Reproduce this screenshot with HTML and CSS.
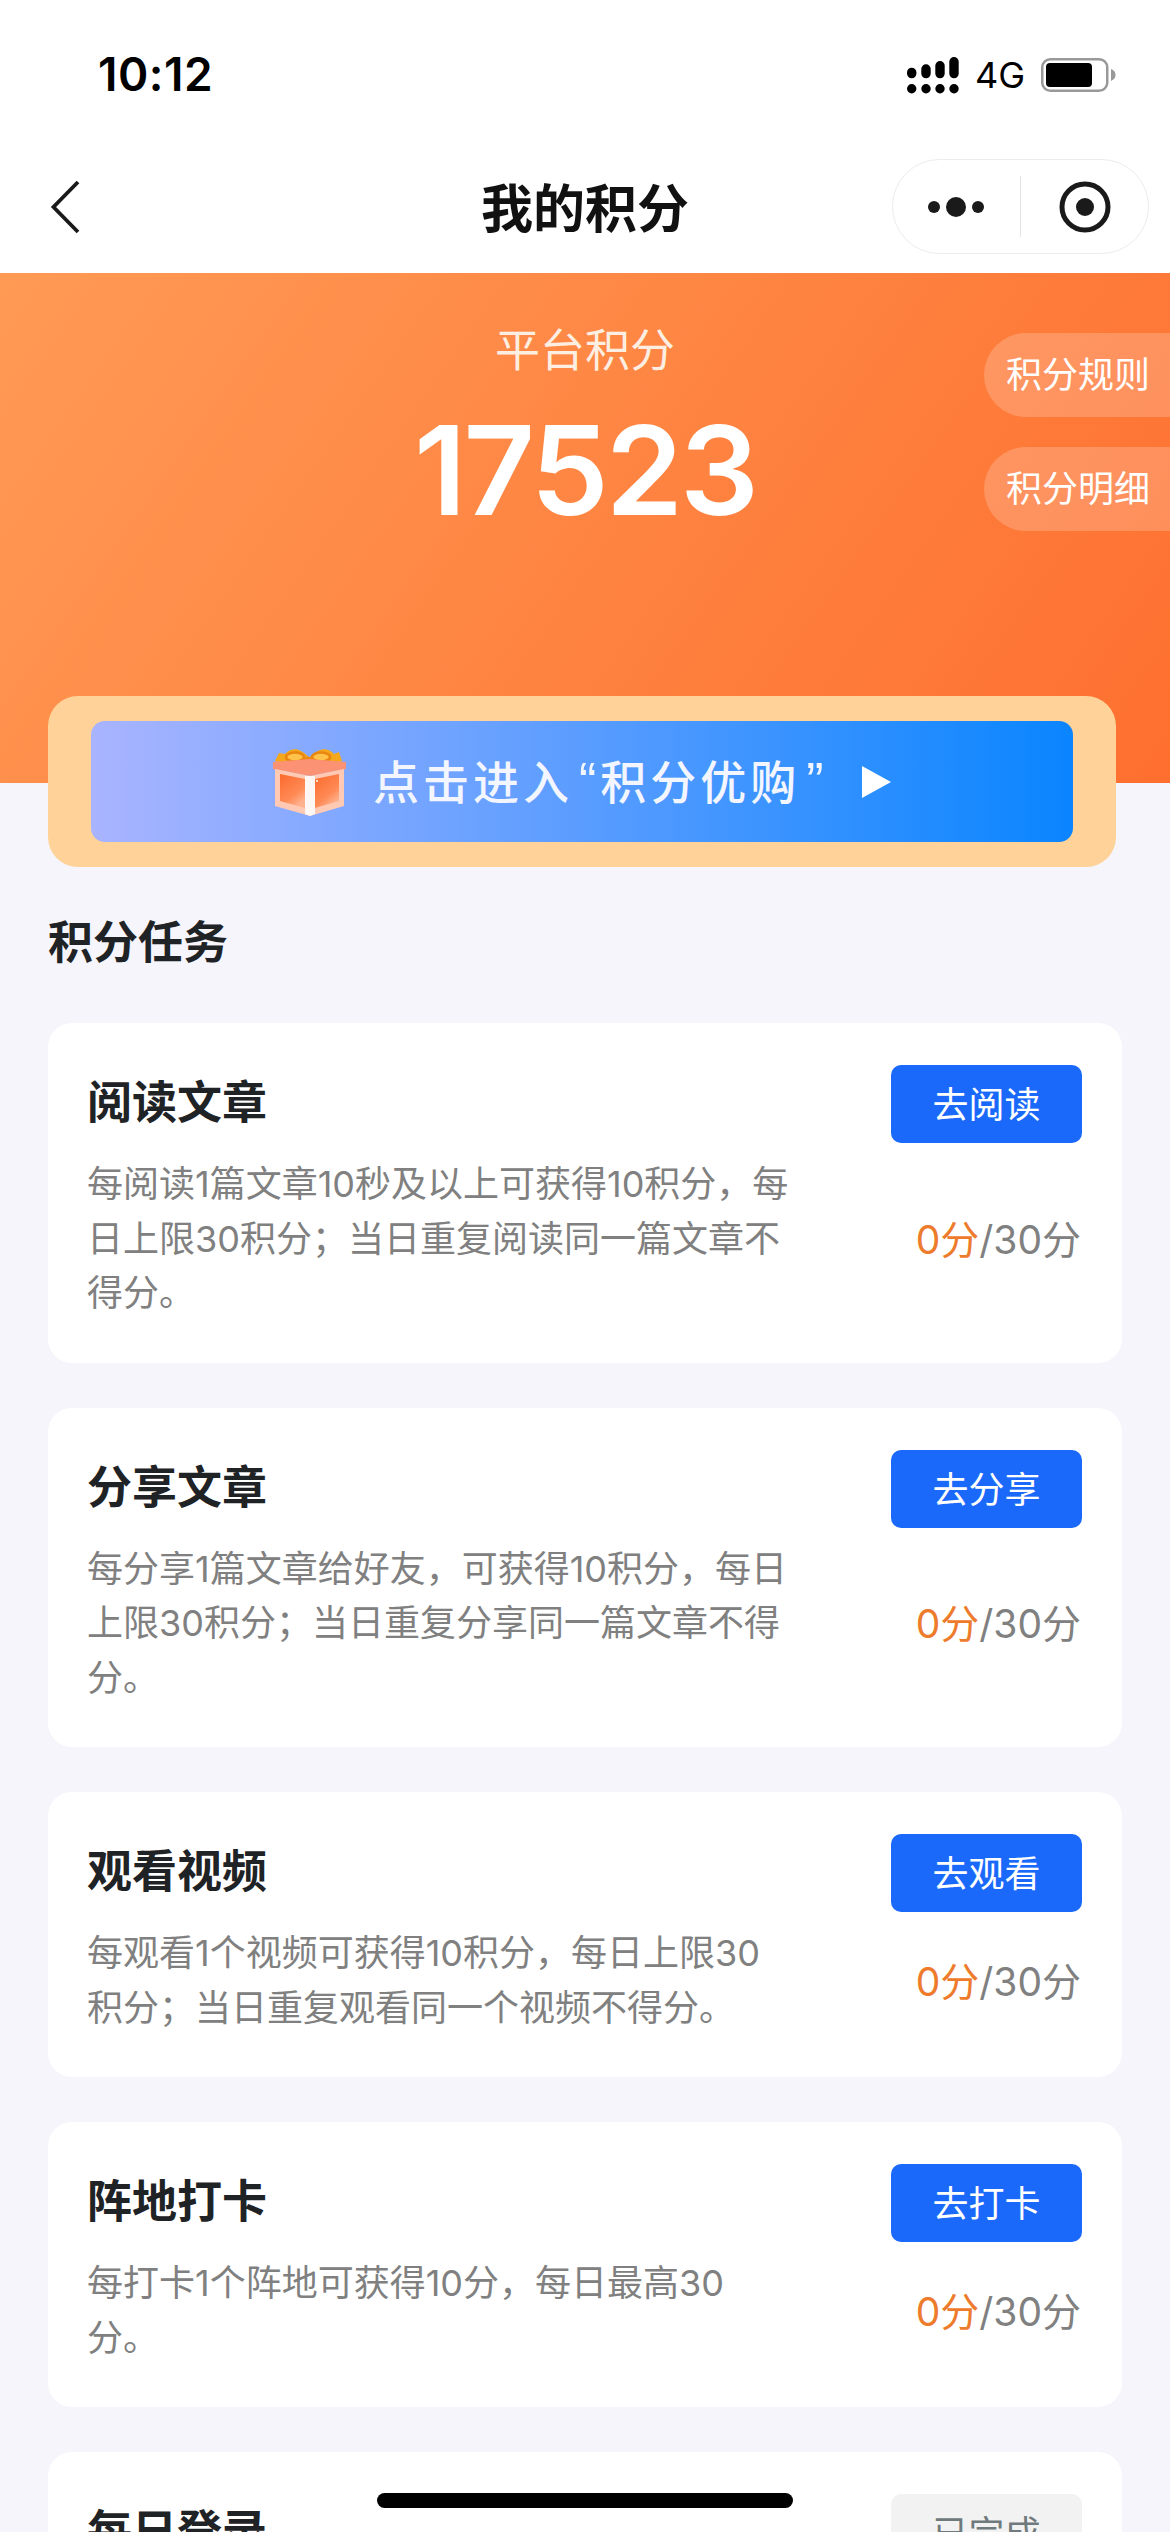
FILE: index.html
```html
<!DOCTYPE html>
<html lang="zh-CN">
<head>
    <meta charset="UTF-8">
    <meta name="viewport" content="width=device-width, initial-scale=1.0">
    <title>我的积分</title>
    <link rel="stylesheet" href="styles.css">
</head>
<body>
    <div class="page">
        <div class="status-bar">
            <span class="time">10:12</span>
            <div class="status-icons">
                <svg class="signal" width="52" height="37" viewBox="0 0 52 37">
                    <rect x="0" y="10.7" width="9.4" height="10.6" rx="4.7"/>
                    <rect x="14.3" y="7.3" width="9.4" height="14" rx="4.7"/>
                    <rect x="28.3" y="4" width="9.4" height="17.3" rx="4.7"/>
                    <rect x="42.3" y="0" width="9.4" height="21.3" rx="4.7"/>
                    <circle cx="4.7" cy="31.7" r="4.7"/>
                    <circle cx="19" cy="31.7" r="4.7"/>
                    <circle cx="33" cy="31.7" r="4.7"/>
                    <circle cx="47" cy="31.7" r="4.7"/>
                </svg>
                <span class="net">4G</span>
                <svg class="battery" width="75" height="34" viewBox="0 0 75 34">
                    <rect x="1.25" y="1.25" width="65" height="31.5" rx="8" fill="none" stroke="#999" stroke-width="2.5"/>
                    <rect x="5" y="5" width="46" height="24" rx="4" fill="#000"/>
                    <path d="M70 11 C73 12 74.5 14 74.5 17 C74.5 20 73 21 70 23 Z" fill="#999"/>
                </svg>
            </div>
        </div>

        <div class="nav-bar">
            <svg class="back" width="32" height="54" viewBox="0 0 32 54">
                <path d="M28 2 L3.5 27 L28 52" fill="none" stroke="#1a1a1a" stroke-width="3.8"/>
            </svg>
            <h1 class="nav-title">我的积分</h1>
            <div class="capsule">
                <svg class="more" width="56" height="20" viewBox="0 0 56 20">
                    <circle cx="6" cy="10" r="6"/>
                    <circle cx="28" cy="10" r="10"/>
                    <circle cx="50" cy="10" r="6"/>
                </svg>
                <span class="capsule-line"></span>
                <svg class="target" width="52" height="52" viewBox="0 0 52 52">
                    <circle cx="26" cy="26" r="23" fill="none" stroke="#1a1a1a" stroke-width="5"/>
                    <circle cx="26" cy="26" r="9" fill="#1a1a1a"/>
                </svg>
            </div>
        </div>

        <div class="hero">
            <div class="hero-label">平台积分</div>
            <div class="hero-score">17523</div>
            <a class="hero-pill pill-rule">积分规则</a>
            <a class="hero-pill pill-detail">积分明细</a>
        </div>

        <div class="banner-wrap">
            <div class="banner">
                <svg class="gift" width="75" height="68" viewBox="0 0 75 68">
                    <defs>
                        <linearGradient id="boxFill" x1="0" y1="0" x2="0.6" y2="1">
                            <stop offset="0" stop-color="#fb6a2c"/>
                            <stop offset="0.7" stop-color="#ff8a55"/>
                            <stop offset="1" stop-color="#ffb28f"/>
                        </linearGradient>
                    </defs>
                    <path d="M3 13 L7 5 L13 6 C17 1 24 0 29 3 C33 5 36 8 37 10 C39 8 42 5 46 3 C51 0 58 1 62 6 L67 4 L70 13 L60 18 H14 Z" fill="#f5a81c"/>
                    <ellipse cx="23" cy="9" rx="9" ry="4.5" fill="#ffc24a" stroke="#e8860f" stroke-width="2.6"/>
                    <ellipse cx="49" cy="9" rx="9" ry="4.5" fill="#ffc24a" stroke="#e8860f" stroke-width="2.6"/>
                    <circle cx="36" cy="12" r="3.5" fill="#ee8a12"/>
                    <path d="M1 14 L37 11 L74 14 V21 L38 28 L1 21 Z" fill="#fb9274"/>
                    <path d="M3 21 L38 28 L72 21 V58 L38 68 L3 58 Z" fill="#ffc9b4"/>
                    <path d="M8 26 L33 31 V60 L8 53 Z" fill="url(#boxFill)"/>
                    <path d="M43 31 L67 26 V53 L43 60 Z" fill="url(#boxFill)"/>
                    <path d="M33 28 L43 28 V66 L38 68 L33 66 Z" fill="#fff" opacity="0.85"/>
                    <circle cx="45" cy="33" r="1" fill="#fff"/>
                </svg>
                <span class="banner-text">点击进入<span class="quote">“</span>积分优购<span class="quote">”</span></span>
                <span class="banner-arrow"></span>
            </div>
        </div>

        <h2 class="section-title">积分任务</h2>

        <div class="task-list">
            <div class="task">
                <div class="task-info">
                    <h3>阅读文章</h3>
                    <p>每阅读1篇文章10秒及以上可获得10积分，每日上限30积分；当日重复阅读同一篇文章不得分。</p>
                </div>
                <div class="task-side">
                    <button class="task-btn">去阅读</button>
                    <div class="task-score"><span><em>0分</em>/30分</span></div>
                </div>
            </div>
            <div class="task">
                <div class="task-info">
                    <h3>分享文章</h3>
                    <p>每分享1篇文章给好友，可获得10积分，每日上限30积分；当日重复分享同一篇文章不得分。</p>
                </div>
                <div class="task-side">
                    <button class="task-btn">去分享</button>
                    <div class="task-score"><span><em>0分</em>/30分</span></div>
                </div>
            </div>
            <div class="task">
                <div class="task-info">
                    <h3>观看视频</h3>
                    <p>每观看1个视频可获得10积分，每日上限30积分；当日重复观看同一个视频不得分。</p>
                </div>
                <div class="task-side">
                    <button class="task-btn">去观看</button>
                    <div class="task-score"><span><em>0分</em>/30分</span></div>
                </div>
            </div>
            <div class="task">
                <div class="task-info">
                    <h3>阵地打卡</h3>
                    <p>每打卡1个阵地可获得10分，每日最高30分。</p>
                </div>
                <div class="task-side">
                    <button class="task-btn">去打卡</button>
                    <div class="task-score"><span><em>0分</em>/30分</span></div>
                </div>
            </div>
            <div class="task">
                <div class="task-info">
                    <h3>每日登录</h3>
                </div>
                <div class="task-side">
                    <button class="task-btn done">已完成</button>
                </div>
            </div>
        </div>

        <div class="home-bar"></div>
    </div>
</body>
</html>
```

FILE: styles.css
```css
html, body {
    margin: 0;
    padding: 0;
}
body {
    font-family: Inter, "Noto Sans CJK SC", sans-serif;
    background-color: #f5f5fb;
}
.page {
    position: relative;
    width: 1170px;
    height: 2532px;
    overflow: hidden;
    background-color: #f5f5fb;
}

/* status bar */
.status-bar {
    height: 146px;
    box-sizing: border-box;
    padding: 46px 54px 0 98px;
    background-color: #fff;
    display: flex;
    justify-content: space-between;
    align-items: flex-start;
}
.time {
    font-size: 46px;
    line-height: 56px;
    font-weight: 600;
    letter-spacing: 0.5px;
    color: #000;
}
.status-icons {
    display: flex;
    align-items: center;
    gap: 16px;
    padding-top: 10px;
}
.signal {
    fill: #000;
}
.net {
    font-size: 36px;
    line-height: 38px;
    color: #000;
}

/* nav bar */
.nav-bar {
    position: relative;
    height: 127px;
    background-color: #fff;
    display: flex;
    align-items: center;
    justify-content: center;
}
.back {
    position: absolute;
    left: 50px;
    top: 34px;
}
.nav-title {
    margin: 0;
    font-size: 52px;
    font-weight: 700;
    color: #111;
    line-height: 70px;
}
.capsule {
    position: absolute;
    right: 21px;
    top: 13px;
    width: 257px;
    height: 95px;
    box-sizing: border-box;
    border: 1px solid #ececec;
    border-radius: 48px;
    display: flex;
    align-items: center;
    padding-left: 35px;
}
.more {
    fill: #1a1a1a;
}
.capsule-line {
    width: 1px;
    height: 61px;
    margin-left: 36px;
    background-color: #e4e4e4;
}
.target {
    margin-left: 38px;
}

/* orange header */
.hero {
    position: relative;
    height: 510px;
    text-align: center;
    color: #fff;
    background: linear-gradient(125deg, #ff9a55 0%, #fe6f2f 100%);
}
.hero-label {
    padding-top: 48px;
    font-size: 45px;
    line-height: 60px;
    color: #fdeee2;
}
.hero-score {
    margin-top: 23px;
    font-size: 124px;
    line-height: 132px;
    font-weight: 600;
    letter-spacing: -3px;
}
.hero-pill {
    position: absolute;
    right: 0;
    width: 186px;
    height: 84px;
    box-sizing: border-box;
    padding-left: 22px;
    border-radius: 42px 0 0 42px;
    background-color: rgba(255, 255, 255, 0.2);
    font-size: 36px;
    line-height: 84px;
    text-align: left;
    white-space: nowrap;
    overflow: hidden;
}
.pill-rule {
    top: 60px;
}
.pill-detail {
    top: 174px;
}

/* banner */
.banner-wrap {
    position: relative;
    box-sizing: border-box;
    width: 1068px;
    height: 171px;
    margin: -87px 0 0 48px;
    padding: 25px 43px 0;
    border-radius: 30px;
    background-color: #fed298;
}
.banner {
    height: 121px;
    border-radius: 14px;
    background: linear-gradient(90deg, #a9b4ff 0%, #0a85ff 100%);
    display: flex;
    align-items: center;
    padding-left: 181px;
}
.banner-text {
    margin-left: 26px;
    padding-bottom: 5px;
    font-family: "Noto Sans CJK SC", sans-serif;
    font-size: 46px;
    font-weight: 500;
    letter-spacing: 4px;
    color: #f3f6ff;
    white-space: nowrap;
}
.quote {
    margin-left: 6px;
    font-family: "Liberation Sans", sans-serif;
    font-size: 52px;
    line-height: 40px;
}
.banner-arrow {
    margin-left: 34px;
    width: 0;
    height: 0;
    border-top: 16px solid transparent;
    border-bottom: 16px solid transparent;
    border-left: 29px solid #fff;
}

/* tasks */
.section-title {
    margin: 46px 0 0 48px;
    font-size: 45px;
    line-height: 60px;
    font-weight: 700;
    color: #1f2326;
}
.task-list {
    margin: 50px 0 0 48px;
    width: 1074px;
    display: flex;
    flex-direction: column;
    gap: 45px;
}
.task {
    box-sizing: border-box;
    padding: 42px 40px 42px 39px;
    border-radius: 24px;
    background-color: #fff;
    display: flex;
    justify-content: space-between;
}
.task-info {
    width: 704px;
}
.task-info h3 {
    margin: 0;
    font-size: 45px;
    line-height: 76px;
    font-weight: 700;
    color: #1f2326;
}
.task-info p {
    margin: 16px 0 0;
    font-size: 36px;
    line-height: 54.5px;
    color: #808080;
}
.task-side {
    width: 191px;
    flex-shrink: 0;
    display: flex;
    flex-direction: column;
}
.task-btn {
    display: block;
    width: 191px;
    height: 78px;
    flex-shrink: 0;
    padding: 0 0 4px;
    border: none;
    border-radius: 10px;
    background-color: #1b69fb;
    color: #fff;
    font-family: inherit;
    font-size: 36px;
}
.task-btn.done {
    background-color: #f2f2f2;
    color: #6f7a7c;
}
.task-score {
    flex: 1;
    margin-top: 14px;
    padding: 0 1px 4px 0;
    display: flex;
    align-items: center;
    justify-content: flex-end;
    font-size: 39px;
    color: #808080;
    white-space: nowrap;
}
.task-score em {
    font-style: normal;
    color: #ee7b2c;
}

.home-bar {
    position: absolute;
    left: 377px;
    bottom: 24px;
    width: 416px;
    height: 15px;
    border-radius: 8px;
    background-color: #000;
}
```
